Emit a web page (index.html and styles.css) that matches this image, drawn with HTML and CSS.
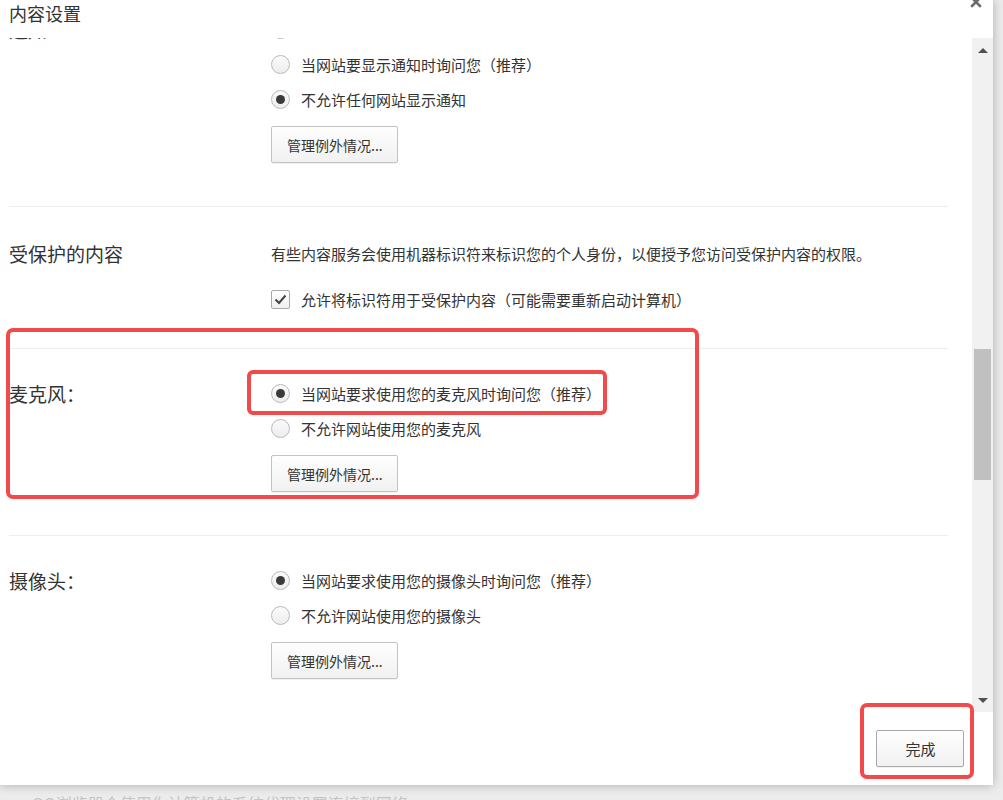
FILE: index.html
```html
<!DOCTYPE html>
<html lang="zh-CN">
<head>
    <meta charset="UTF-8">
    <title>内容设置</title>
    <link rel="stylesheet" href="styles.css">
</head>
<body>
    <div class="dialog">
        <div class="dialog-head">
            <span class="dialog-title">内容设置</span>
            <svg class="close" width="12" height="12" viewBox="0 0 12 12">
                <path d="M2 2 L10 10 M10 2 L2 10" stroke="#6b6b6b" stroke-width="2.6" stroke-linecap="round"/>
            </svg>
        </div>

        <div class="dialog-body">
            <div class="scroll">
                <div class="scroll-inner">
                    <div class="section">
                        <div class="label">通知</div>
                        <div class="options">
                            <div class="row"><span class="radio"></span>允许所有网站显示通知</div>
                            <div class="row"><span class="radio"></span>当网站要显示通知时询问您（推荐）</div>
                            <div class="row"><span class="radio checked"></span>不允许任何网站显示通知</div>
                            <button class="btn">管理例外情况...</button>
                        </div>
                    </div>

                    <div class="section protected">
                        <div class="label">受保护的内容</div>
                        <div class="options">
                            <div class="row">有些内容服务会使用机器标识符来标识您的个人身份，以便授予您访问受保护内容的权限。</div>
                            <div class="row check-row">
                                <span class="checkbox">
                                    <svg width="13" height="11" viewBox="0 0 13 11">
                                        <path d="M1.5 5.5 L5 9 L11.5 1.5" fill="none" stroke="#444" stroke-width="2"/>
                                    </svg>
                                </span>允许将标识符用于受保护内容（可能需要重新启动计算机）
                            </div>
                        </div>
                    </div>

                    <div class="section">
                        <div class="label">麦克风：</div>
                        <div class="options">
                            <div class="row"><span class="radio checked"></span>当网站要求使用您的麦克风时询问您（推荐）</div>
                            <div class="row"><span class="radio"></span>不允许网站使用您的麦克风</div>
                            <button class="btn">管理例外情况...</button>
                        </div>
                    </div>

                    <div class="section">
                        <div class="label">摄像头：</div>
                        <div class="options">
                            <div class="row"><span class="radio checked"></span>当网站要求使用您的摄像头时询问您（推荐）</div>
                            <div class="row"><span class="radio"></span>不允许网站使用您的摄像头</div>
                            <button class="btn">管理例外情况...</button>
                        </div>
                    </div>
                </div>
            </div>
            <div class="scrollbar">
                <div class="arrow up"></div>
                <div class="track"><div class="thumb"></div></div>
                <div class="arrow down"></div>
            </div>
        </div>

        <div class="dialog-foot">
            <button class="btn btn-done">完成</button>
        </div>

        <div class="mark mark-mic"></div>
        <div class="mark mark-ask"></div>
        <div class="mark mark-done"></div>
    </div>
    <div class="behind">QQ浏览器会使用你计算机的系统代理设置连接到网络。</div>
</body>
</html>
```

FILE: styles.css
```css
body {
    margin: 0;
    background: #ececec;
    font-family: "Noto Sans CJK SC", "Noto Sans", sans-serif;
    color: #333;
    overflow: hidden;
}
.dialog {
    position: relative;
    width: 993px;
    height: 785px;
    background: white;
    box-shadow: 0 0 10px rgba(0, 0, 0, 0.28);
    display: flex;
    flex-direction: column;
}
.dialog-head {
    height: 38px;
    display: flex;
    justify-content: space-between;
    align-items: flex-start;
    flex-shrink: 0;
}
.dialog-title {
    font-size: 18px;
    line-height: 26px;
    padding-left: 9px;
    color: #333;
}
.close {
    margin-top: -4px;
    margin-right: 11px;
}
.dialog-body {
    height: 674px;
    display: flex;
    flex-shrink: 0;
}
.scroll {
    width: 972px;
    overflow: hidden;
}
.scroll-inner {
    margin-top: -53px;
    padding-left: 9px;
}
.section {
    width: 939px;
    display: grid;
    grid-template-columns: 262px 1fr;
    padding: 27px 0 43px;
    border-bottom: 1px solid #eeeeee;
}
.section.protected {
    padding: 29px 0 31px;
}
.label {
    font-size: 19px;
    line-height: 35px;
    color: #333;
}
.options {
    display: flex;
    flex-direction: column;
    align-items: flex-start;
}
.row {
    height: 35px;
    display: flex;
    align-items: center;
    font-size: 15px;
    color: #333;
    white-space: nowrap;
}
.check-row {
    margin-top: 11px;
}
.radio {
    width: 19px;
    height: 19px;
    box-sizing: border-box;
    border: 1px solid #b9b9b9;
    border-radius: 50%;
    background: linear-gradient(#fbfbfb, #ededed);
    margin-right: 11px;
    display: flex;
    align-items: center;
    justify-content: center;
}
.radio.checked::after {
    content: "";
    width: 9px;
    height: 9px;
    border-radius: 50%;
    background: #3a3a3a;
}
.checkbox {
    width: 19px;
    height: 19px;
    box-sizing: border-box;
    border: 1px solid #aaaaaa;
    border-radius: 2px;
    background: linear-gradient(#ffffff, #f0f0f0);
    margin-right: 11px;
    display: flex;
    align-items: center;
    justify-content: center;
}
.btn {
    margin-top: 9px;
    height: 37px;
    padding: 0 14px 0 15px;
    font-family: inherit;
    font-size: 14px;
    color: #333;
    border: 1px solid #c3c3c3;
    border-radius: 2px;
    background: linear-gradient(#fefefe, #f1f1f1);
    box-shadow: 0 1px 1px rgba(0, 0, 0, 0.06);
}
.scrollbar {
    width: 21px;
    background: #f1f1f1;
    display: flex;
    flex-direction: column;
}
.arrow {
    height: 24px;
    display: flex;
    align-items: center;
    justify-content: center;
    flex-shrink: 0;
}
.arrow.up::after {
    content: "";
    border-left: 5px solid transparent;
    border-right: 5px solid transparent;
    border-bottom: 5px solid #505050;
}
.arrow.down {
    height: 23px;
}
.arrow.down::after {
    content: "";
    border-left: 5px solid transparent;
    border-right: 5px solid transparent;
    border-top: 5px solid #505050;
}
.track {
    flex: 1;
}
.thumb {
    margin: 287px 2px 0;
    height: 131px;
    background: #c0c0c0;
}
.dialog-foot {
    flex: 1;
    display: flex;
    justify-content: flex-end;
    align-items: flex-start;
    padding: 18px 29px 0 0;
}
.btn-done {
    margin-top: 0;
    width: 88px;
    height: 37px;
    font-size: 15px;
    border-color: #a9a9a9;
}
.mark {
    position: absolute;
    border: 4px solid #f24a4a;
    border-radius: 7px;
    box-sizing: border-box;
}
.mark-mic {
    left: 6px;
    top: 328px;
    width: 693px;
    height: 171px;
}
.mark-ask {
    left: 247px;
    top: 370px;
    width: 360px;
    height: 45px;
    border-radius: 6px;
}
.mark-done {
    left: 860px;
    top: 703px;
    width: 114px;
    height: 76px;
}
.behind {
    margin: 8px 0 0 32px;
    font-size: 16px;
    line-height: 20px;
    color: #c4c4c4;
}
```
